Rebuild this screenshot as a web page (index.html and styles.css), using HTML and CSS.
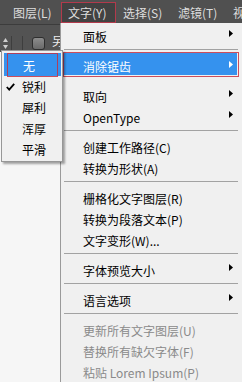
FILE: index.html
```html
<!DOCTYPE html>
<html lang="zh-CN">
<head>
<meta charset="utf-8">
<title>文字菜单</title>
<link rel="stylesheet" href="styles.css">
</head>
<body>
<div class="screen">
  <div class="menubar">
    <span class="mb-item">图层(L)</span>
    <span class="mb-item active">文字(Y)</span>
    <span class="mb-item">选择(S)</span>
    <span class="mb-item">滤镜(T)</span>
    <span class="mb-item">视图(V)</span>
  </div>
  <div class="toolbar">
    <svg class="spinner" width="5" height="11" viewBox="0 0 5 11"><polygon points="2.5,0 5,4 0,4" fill="#cfcfcf"/><polygon points="0,7 5,7 2.5,11" fill="#cfcfcf"/></svg>
    <span class="tb-div first"></span>
    <span class="tb-div"></span>
    <span class="checkbox"></span>
    <span class="tb-label">另存</span>
  </div>
  <div class="workspace"></div>

  <div class="menu">
    <div class="item sub"><span class="label">面板</span><span class="arrow"></span></div>
    <div class="sep"></div>
    <div class="item sub hl"><span class="hl-bg"></span><span class="label">消除锯齿</span><span class="arrow"></span><span class="annot"></span></div>
    <div class="spacer"></div>
    <div class="item sub"><span class="label">取向</span><span class="arrow"></span></div>
    <div class="item sub"><span class="label">OpenType</span><span class="arrow"></span></div>
    <div class="sep"></div>
    <div class="item"><span class="label">创建工作路径(C)</span></div>
    <div class="item"><span class="label">转换为形状(A)</span></div>
    <div class="sep"></div>
    <div class="item"><span class="label">栅格化文字图层(R)</span></div>
    <div class="item"><span class="label">转换为段落文本(P)</span></div>
    <div class="item"><span class="label">文字变形(W)...</span></div>
    <div class="sep"></div>
    <div class="item sub"><span class="label">字体预览大小</span><span class="arrow"></span></div>
    <div class="sep"></div>
    <div class="item sub"><span class="label">语言选项</span><span class="arrow"></span></div>
    <div class="sep"></div>
    <div class="item disabled"><span class="label">更新所有文字图层(U)</span></div>
    <div class="item disabled"><span class="label">替换所有缺欠字体(F)</span></div>
    <div class="item disabled"><span class="label">粘贴 Lorem Ipsum(P)</span></div>
  </div>

  <div class="submenu">
    <div class="sitem hl"><span class="hl-bg"></span><span class="label">无</span><span class="annot"></span></div>
    <div class="sitem"><svg class="check" width="9" height="8" viewBox="0 0 9 8"><polyline points="0.8,4 3.2,6.6 8.2,0.8" fill="none" stroke="#000" stroke-width="1.8"/></svg><span class="label">锐利</span></div>
    <div class="sitem"><span class="label">犀利</span></div>
    <div class="sitem"><span class="label">浑厚</span></div>
    <div class="sitem"><span class="label">平滑</span></div>
  </div>
</div>
</body>
</html>
```

FILE: styles.css
```css
* { box-sizing: border-box; }
html, body { margin: 0; padding: 0; }
body {
  font-family: "Noto Sans CJK SC", "Noto Sans", sans-serif;
  font-size: 12px;
  background: #f5f5f5;
}
.screen {
  position: relative;
  width: 242px;
  height: 382px;
  overflow: hidden;
  display: flex;
  flex-direction: column;
}
.menubar {
  height: 25px;
  flex: none;
  display: flex;
  padding-left: 6px;
  background: #505050;
  border-bottom: 1px solid #3c3c3c;
  white-space: nowrap;
}
.mb-item {
  flex: none;
  width: 55px;
  height: 21px;
  margin-top: 2px;
  padding-left: 7px;
  line-height: 21px;
  color: #dedede;
}
.mb-item.active {
  background: #424242;
  border: 1px solid #b23a4c;
  padding-left: 6px;
  line-height: 19px;
}
.toolbar {
  height: 27px;
  flex: none;
  display: flex;
  align-items: flex-start;
  padding-left: 3px;
  background: #535353;
}
.spinner { margin-top: 13px; flex: none; }
.tb-div {
  width: 1px;
  height: 16px;
  margin-top: 11px;
  margin-left: 10px;
  background: #3e3e3e;
}
.tb-div.first { margin-left: 3px; }
.checkbox {
  width: 13px;
  height: 13px;
  margin-top: 12px;
  margin-left: 9px;
  border: 1px solid #2e2e2e;
  border-radius: 3px;
  background: linear-gradient(#8c8c8c, #696969);
}
.tb-label {
  margin-left: 7px;
  margin-top: 4px;
  color: #eeeeee;
  line-height: 24px;
  white-space: nowrap;
}
.workspace { flex: 1; background: #f6f6f6; }

/* main dropdown */
.menu {
  position: absolute;
  left: 60px;
  top: 23px;
  width: 182px;
  height: 362px;
  padding-top: 3px;
  background: #f0f0f0;
  border-left: 1px solid #9a9a9a;
  color: #000;
}
.item {
  position: relative;
  height: 21px;
  line-height: 21px;
  padding-left: 22px;
  white-space: nowrap;
}
.item .label { position: relative; }
.item.disabled { color: #8a8a8a; }
.arrow {
  position: absolute;
  right: 9px;
  top: 4px;
  width: 4px;
  height: 7px;
  background: #000;
  clip-path: polygon(0 0, 100% 50%, 0 100%);
}
.sep {
  height: 1px;
  margin: 2px 4px 6px 3px;
  background: #a2a2a2;
}
.spacer { height: 9px; }
.hl { color: #fff; }
.hl-bg {
  position: absolute;
  top: -3px;
  bottom: 2px;
  left: 2px;
  right: 5px;
  background: #3592ee;
}
.item.hl .arrow { background: #fff; top: 5px; }
.annot {
  position: absolute;
  top: -4px;
  bottom: 0;
  left: 2px;
  right: 3px;
  border: 1px solid rgba(196, 48, 66, 0.85);
}

/* submenu */
.submenu {
  position: absolute;
  left: 1px;
  top: 50px;
  width: 62px;
  height: 112px;
  padding-top: 4px;
  background: #f0f0f0;
  border: 1px solid #979797;
  box-shadow: 2px 2px 2px rgba(0, 0, 0, 0.35);
  color: #000;
}
.sitem {
  position: relative;
  height: 21px;
  line-height: 21px;
  padding-left: 20px;
  white-space: nowrap;
}
.sitem .label { position: relative; }
.sitem .hl-bg { top: -2px; bottom: 0; left: 2px; right: 1px; }
.sitem.hl .label { padding-left: 1px; }
.sitem .annot { top: -2px; bottom: -1px; left: 5px; right: 4px; }
.check { position: absolute; left: 4px; top: 7px; }
```
